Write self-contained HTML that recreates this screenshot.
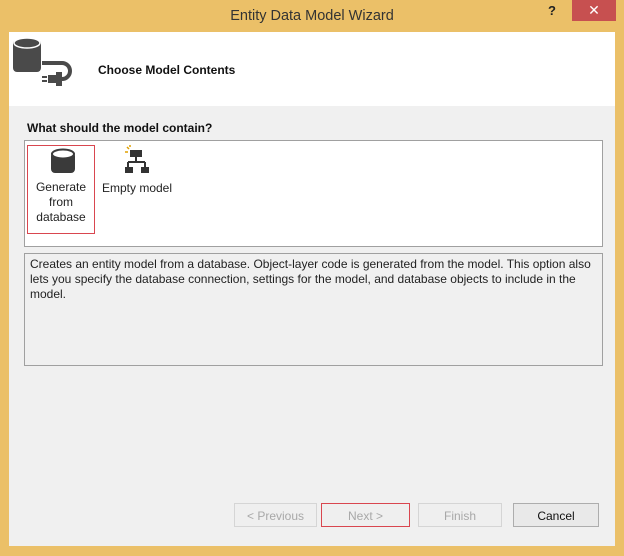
<!DOCTYPE html>
<html><head><style>
body{margin:0;width:624px;height:556px;background:#ebc068;font-family:"Liberation Sans",sans-serif;position:relative;overflow:hidden}
.a{position:absolute}
.btn{position:absolute;top:503px;height:24px;border:1px solid #d5d5d5;background:#efefef;color:#a8a8a8;font-size:12px;text-align:center;line-height:24px;box-sizing:border-box}
</style></head><body>
<div class="a" style="left:0;top:0;width:624px;height:33px;text-align:center;line-height:33px;font-size:14.5px;color:#333">Entity Data Model Wizard</div>
<div class="a" style="left:548px;top:3px;font-size:13px;font-weight:bold;color:#222">?</div>
<div class="a" style="left:572px;top:0;width:44px;height:21px;background:#c75050;color:#fff;text-align:center;line-height:21px;font-size:14px">✕</div>
<div class="a" style="left:9px;top:32px;width:606px;height:514px;background:#f0f0f0"></div>
<div class="a" style="left:9px;top:32px;width:606px;height:74px;background:#fff"></div>
<svg class="a" style="left:12px;top:36px" width="62" height="52" viewBox="0 0 62 52">
<rect x="1" y="4" width="28" height="32" rx="4" fill="#4a4a4a"/><ellipse cx="15" cy="7" rx="13" ry="5" fill="#4a4a4a" stroke="#fff" stroke-width="1.5"/>
<path d="M30 27 h20 a8 8 0 0 1 0 16 h-4" stroke="#4a4a4a" stroke-width="4" fill="none"/>
<rect x="44" y="36" width="6" height="14" fill="#4a4a4a"/><rect x="36" y="39" width="10" height="8" fill="#4a4a4a"/><rect x="30" y="40" width="5" height="2" fill="#4a4a4a"/><rect x="30" y="44" width="5" height="2" fill="#4a4a4a"/>
</svg>
<div class="a" style="left:98px;top:63px;font-size:12px;font-weight:bold;color:#111">Choose Model Contents</div>
<div class="a" style="left:27px;top:121px;font-size:12px;font-weight:bold;color:#111">What should the model contain?</div>
<div class="a" style="left:24px;top:140px;width:577px;height:105px;background:#fff;border:1px solid #a0a0a0"></div>
<div class="a" style="left:27px;top:145px;width:66px;height:87px;border:1px solid #d9464f"></div>
<svg class="a" style="left:50px;top:148px" width="26" height="26" viewBox="0 0 26 26"><rect x="1" y="4" width="24" height="21" rx="4" fill="#3a3a3a"/><ellipse cx="13" cy="6" rx="11" ry="4.5" fill="#fff" stroke="#3a3a3a" stroke-width="2"/></svg>
<div class="a" style="left:28px;top:180px;width:66px;text-align:center;font-size:12px;line-height:15px;color:#222">Generate<br>from<br>database</div>
<svg class="a" style="left:124px;top:145px" width="26" height="30" viewBox="0 0 26 30"><rect x="6" y="5" width="12" height="7" fill="#333"/><path d="M12 12v5M4 17h17M4 17v5M21 17v5" stroke="#333" stroke-width="2" fill="none"/><rect x="1" y="22" width="8" height="6" fill="#333"/><rect x="17" y="22" width="8" height="6" fill="#333"/><path d="M3 2l2 2M1 7h3M6 0v2" stroke="#e0a000" stroke-width="1.5"/></svg>
<div class="a" style="left:102px;top:181px;font-size:12px;color:#222">Empty model</div>
<div class="a" style="left:24px;top:253px;width:577px;height:111px;background:#f0f0f0;border:1px solid #a0a0a0"></div>
<div class="a" style="left:30px;top:257px;font-size:12px;line-height:15px;color:#222;white-space:nowrap">Creates an entity model from a database. Object-layer code is generated from the model. This option also<br>lets you specify the database connection, settings for the model, and database objects to include in the<br>model.</div>
<div class="btn" style="left:234px;width:83px">&lt; Previous</div>
<div class="btn" style="left:321px;width:89px;border-color:#d9464f">Next &gt;</div>
<div class="btn" style="left:418px;width:84px">Finish</div>
<div class="btn" style="left:513px;width:86px;color:#111;border-color:#adadad;background:#e9e9e9">Cancel</div>
</body></html>
